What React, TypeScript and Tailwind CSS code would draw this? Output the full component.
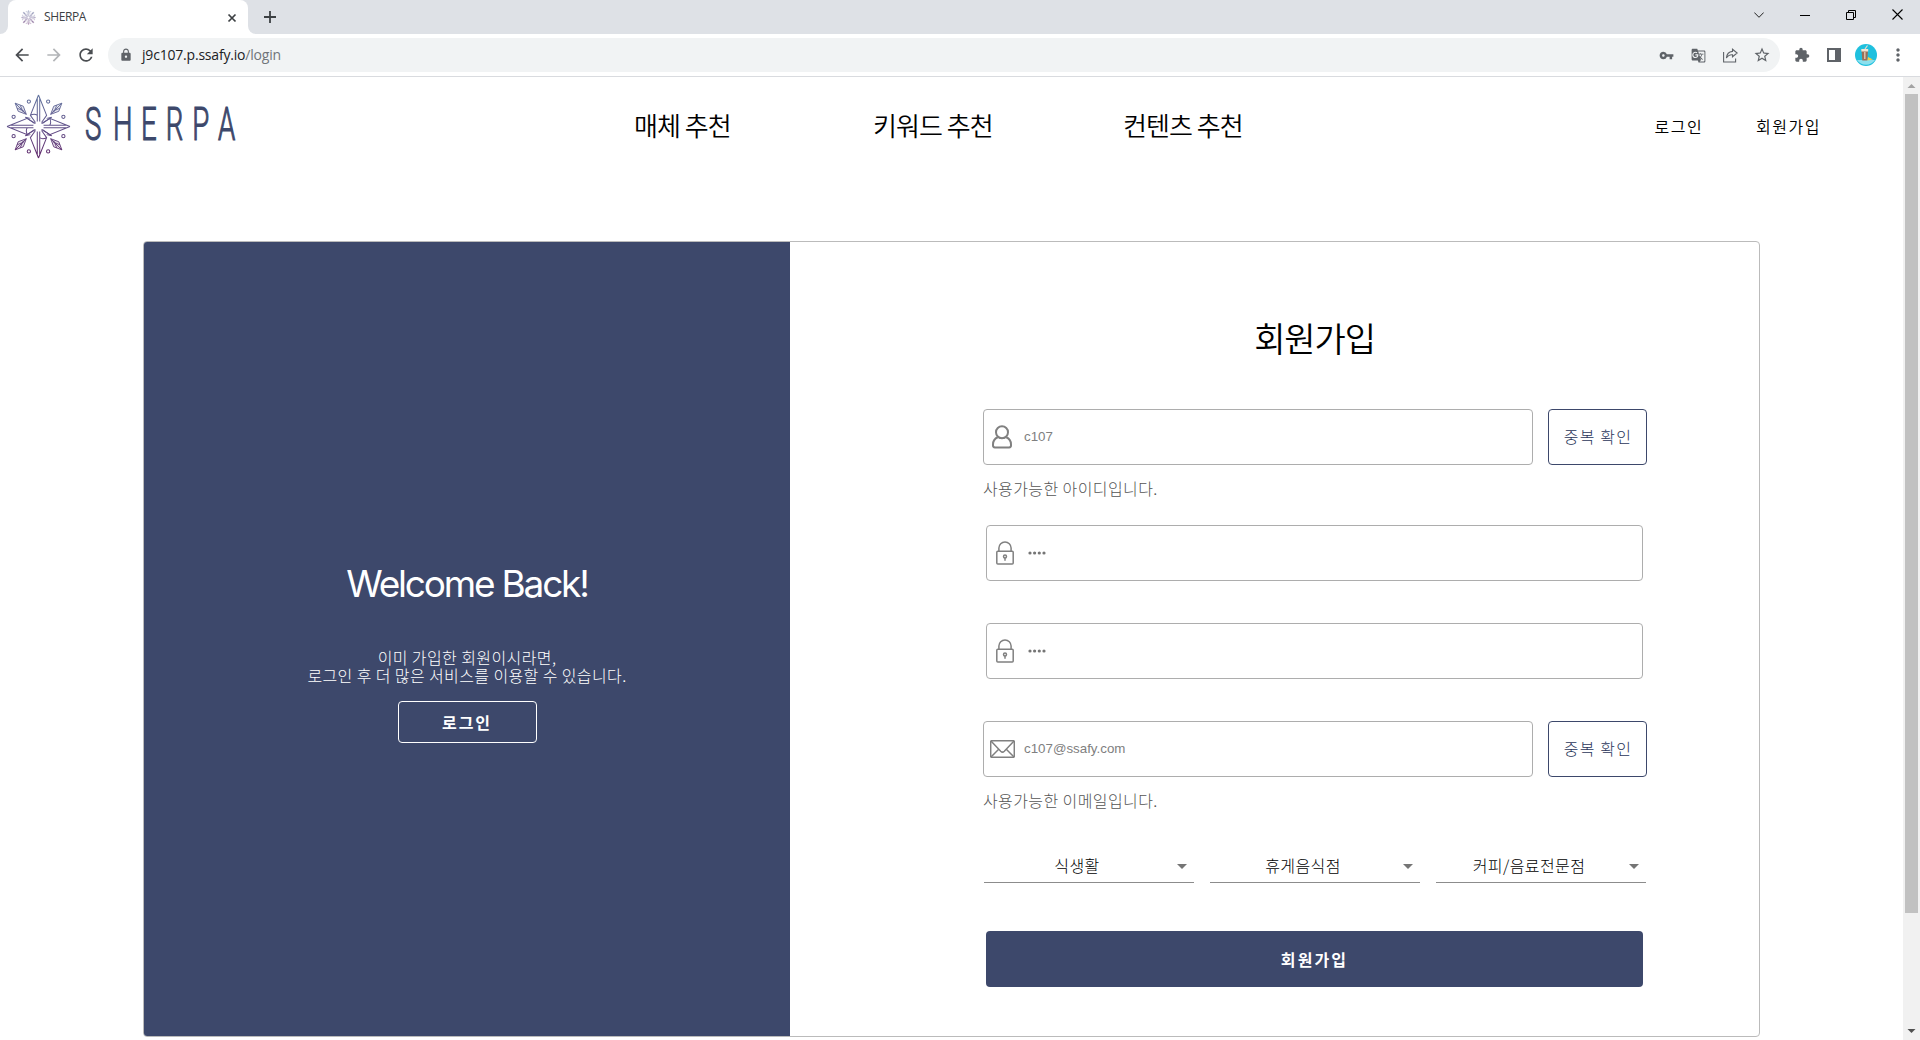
import React from "react";
import {
  MdArrowBack,
  MdArrowForward,
  MdRefresh,
  MdLock,
  MdVpnKey,
  MdGTranslate,
  MdStarBorder,
  MdExtension,
  MdMoreVert,
  MdArrowDropDown,
} from "react-icons/md";

function Compass({ className }: { className: string }) {
  const arms = [0, 90, 180, 270];
  return (
    <svg viewBox="-32 -32 64 64" className={className} fill="none" stroke="url(#compassFade)" strokeWidth="1">
      <defs>
        <linearGradient id="compassFade" gradientUnits="userSpaceOnUse" x1="0" y1="-32" x2="0" y2="32">
          <stop offset="0" stopColor="#62759f" />
          <stop offset="0.5" stopColor="#62538a" />
          <stop offset="1" stopColor="#5f2468" />
        </linearGradient>
      </defs>
      <path d="M0 -31L8 -11L3 -4M0 -31L-8 -11L-3 -4M-1.2 -28V-5M1.2 -28V-5M-8 -11Q-4 -13 -1.2 -11" />
      <path d="M0 31L8 11L3 4M0 31L-8 11L-3 4M-1.2 28V5M1.2 28V5M8 11Q4 13 1.2 11" />
      <path d="M-31 0L-11 8L-4 3M-31 0L-11 -8L-4 -3M-28 -1.2H-5M-28 1.2H-5M-11 8Q-13 4 -11 1.2" />
      <path d="M31 0L11 8L4 3M31 0L11 -8L4 -3M28 -1.2H5M28 1.2H5M11 -8Q13 -4 11 -1.2" />
      <path d="M-8 -8L-13 -9L-3 -3M8 -8L13 -9L3 -3M-8 8L-13 9L-3 3M8 8L13 9L3 3" />
      <g fill="url(#compassFade)" fillOpacity="0.15" strokeWidth="0.9">
        <path d="M-23 -23L-20 -15L-12 -12L-15 -20ZL-12 -12M-21 -18L-14 -15M-18 -21L-15 -14" />
        <path d="M23 -23L20 -15L12 -12L15 -20ZL12 -12M21 -18L14 -15M18 -21L15 -14" />
        <path d="M-23 23L-20 15L-12 12L-15 20ZL-12 12M-21 18L-14 15M-18 21L-15 14" />
        <path d="M23 23L20 15L12 12L15 20ZL12 12M21 18L14 15M18 21L15 14" />
      </g>
      {arms.map((a) => (
        <g key={a}>
          <circle cx={a < 180 ? 9.5 : -9.5} cy={a % 180 ? 24.5 : -24.5} r="1.6" />
          <circle cx={a < 180 ? 24.5 : -24.5} cy={a % 180 ? 9.5 : -9.5} r="1.6" />
        </g>
      ))}
    </svg>
  );
}

function Wordmark() {
  return (
    <svg width="164" height="64" viewBox="0 0 164 64" className="ml-[12px] overflow-visible">
      <text
        transform="scale(0.6 1)"
        y="46.5"
        x="3.5 50 96.5 138 182 225"
        fontFamily="Roboto"
        fontSize="46"
        fontWeight="300"
        fill="#3d486b"
        stroke="#3d486b"
        strokeWidth="1.2"
      >
        SHERPA
      </text>
    </svg>
  );
}

function UserIcon() {
  return (
    <svg width="20" height="24" viewBox="0 0 20 24" fill="none" stroke="#808080" strokeWidth="2">
      <circle cx="10" cy="7.3" r="6" />
      <path d="M5.8 12.3C3 13.4 1 16.3 1 19.6V20.6Q1 22.4 2.8 22.4H17.2Q19 22.4 19 20.6V19.6C19 16.3 17 13.4 14.2 12.3" />
      <path d="M5.8 12.3Q10 14.6 14.2 12.3" strokeWidth="1.2" />
    </svg>
  );
}

function PadlockIcon() {
  return (
    <svg width="18" height="24" viewBox="0 0 18 24" fill="none" stroke="#808080" strokeWidth="1.5">
      <rect x="0.8" y="10.3" width="16.4" height="12.7" rx="1" />
      <path d="M2.9 10V7A6.1 6.1 0 0 1 15.1 7V10" />
      <circle cx="9" cy="15.4" r="1.5" />
      <path d="M9 17V19.8" />
    </svg>
  );
}

function MailIcon() {
  return (
    <svg width="25" height="18" viewBox="0 0 25 18" fill="none" stroke="#808080" strokeWidth="1.5">
      <rect x="0.7" y="0.7" width="23.6" height="16.6" rx="1" />
      <path d="M1 1L10.7 11.2Q12.5 13 14.3 11.2L24 1M1 17L8.7 9.3M24 17L16.3 9.3" />
    </svg>
  );
}

function Dots() {
  return (
    <svg width="18" height="4" viewBox="0 0 18 4" fill="#757575" className="ml-px">
      <circle cx="2" cy="2" r="1.6" />
      <circle cx="6.6" cy="2" r="1.6" />
      <circle cx="11.3" cy="2" r="1.6" />
      <circle cx="16" cy="2" r="1.6" />
    </svg>
  );
}

function BrowserChrome() {
  return (
    <div className="shrink-0 font-['Open_Sans',sans-serif]">
      <div className="flex h-[34px] bg-[#dee1e6]">
        <div className="flex w-2 bg-white">
          <div className="w-2 rounded-br-lg bg-[#dee1e6]" />
        </div>
        <div className="flex w-[240px] items-center rounded-t-lg bg-white pr-[11px] pl-[13px]">
          <Compass className="size-[15px]" />
          <span className="ml-2 text-[12px] tracking-[-0.4px] text-[#3c4043]">SHERPA</span>
          <svg className="mt-px ml-auto" width="10" height="10" viewBox="0 0 10 10" stroke="#3c4043" strokeWidth="1.7">
            <path d="M1.5 1.5L8.5 8.5M8.5 1.5L1.5 8.5" />
          </svg>
        </div>
        <div className="flex w-2 bg-white">
          <div className="w-2 rounded-bl-lg bg-[#dee1e6]" />
        </div>
        <svg className="mt-[11px] ml-2" width="12" height="12" viewBox="0 0 12 12" stroke="#3c4043" strokeWidth="1.8">
          <path d="M6 0V12M0 6H12" />
        </svg>
        <div className="mt-[9px] mr-[17px] ml-auto flex h-[11px] items-center gap-[36px]">
          <svg width="10" height="10" viewBox="0 0 10 10" fill="none" stroke="#222">
            <path d="M0.3 2.5L5 7.3L9.7 2.5" />
          </svg>
          <svg width="10" height="10" viewBox="0 0 10 10" stroke="#000">
            <path d="M0 5.5H10" />
          </svg>
          <svg width="10" height="10" viewBox="0 0 10 10" fill="none" stroke="#000">
            <path d="M0.5 2.5H7.5V9.5H0.5ZM2.5 2.5V0.5H9.5V7.5H7.5" />
          </svg>
          <svg width="11" height="11" viewBox="0 0 11 11" stroke="#000" strokeWidth="1.1">
            <path d="M0.5 0.5L10.5 10.5M10.5 0.5L0.5 10.5" />
          </svg>
        </div>
      </div>
      <div className="flex h-[43px] items-center border-b border-[#d9dbdf] bg-white pr-[11px] pl-[12px] text-[#5f6368]">
        <MdArrowBack className="size-5 text-[#4a4d51]" />
        <MdArrowForward className="ml-3 size-5 text-[#b3b5b8]" />
        <MdRefresh className="ml-3 size-5 text-[#4a4d51]" />
        <div className="ml-[12px] flex h-[34px] w-[1672px] shrink-0 items-center rounded-full bg-[#f1f3f4] pr-[9px] pl-[11px]">
          <MdLock className="size-[14px]" />
          <span className="ml-[9px] pb-px text-[14px] tracking-[-0.2px] whitespace-nowrap text-[#202124]">
            j9c107.p.ssafy.io<span className="text-[#70757a]">/login</span>
          </span>
          <MdVpnKey className="ml-auto size-[15px]" />
          <MdGTranslate className="ml-[17px] size-[15px]" />
          <svg className="ml-[17px]" width="15" height="15" viewBox="0 0 15 15" fill="none" stroke="#5f6368" strokeWidth="1.1">
            <path d="M0.6 4V14H12.6V10.5M9.5 1.2L14.2 5L9.5 8.8V6.7Q5.5 6.4 3.4 10Q4 4 9.5 3.4Z" />
          </svg>
          <MdStarBorder className="ml-[15px] size-[18px]" />
        </div>
        <MdExtension className="ml-[14px] size-4 shrink-0" />
        <svg className="ml-[17px] shrink-0" width="14" height="14" viewBox="0 0 14 14">
          <path fill="#5f6368" fillRule="evenodd" d="M0 0H14V14H0ZM2 2V12H8V2Z" />
        </svg>
        <svg className="ml-[14px] shrink-0" width="22" height="22" viewBox="0 0 22 22">
          <circle cx="11" cy="11" r="11" fill="#1fc0de" />
          <path d="M2 16H20A11 11 0 0 1 2 16" fill="#8ce0ee" />
          <path d="M6.5 6H13L12.3 16.5H7.3Z" fill="#9a6f58" />
          <path d="M6.3 5H13.2V7.5H6.3Z" fill="#f3e4d2" />
          <path d="M10 5L12.5 1.5" stroke="#e7dcd0" strokeWidth="1.2" />
          <path d="M9.8 8V15" stroke="#e0c9b2" strokeWidth="1.4" />
          <path d="M13 13L18 15.5L12.5 16.5Z" fill="#f2cf4a" />
        </svg>
        <MdMoreVert className="ml-[11px] size-5 shrink-0" />
      </div>
    </div>
  );
}

function SiteHeader() {
  return (
    <header className="flex h-[98px] shrink-0 items-center text-black">
      <div className="flex w-[634px] items-center pl-[6px]">
        <Compass className="size-[65px]" />
        <Wordmark />
      </div>
      <nav className="flex pb-[3px] text-[26px] font-[350] tracking-[-0.95px] whitespace-nowrap">
        <span className="w-[239px]">매체 추천</span>
        <span className="w-[250px]">키워드 추천</span>
        <span>컨텐츠 추천</span>
      </nav>
      <div className="mr-[82px] ml-auto flex gap-[53px] text-[16px] font-[350] tracking-[1.5px]">
        <span>로그인</span>
        <span>회원가입</span>
      </div>
    </header>
  );
}

function Field({ icon, children, className }: { icon: React.ReactNode; children: React.ReactNode; className: string }) {
  return (
    <div className={`flex h-[56px] items-center rounded-[4px] border border-[#adadad] bg-white ${className}`}>
      <div className="flex w-[36px] justify-center">{icon}</div>
      <div className="ml-[4px] font-['Liberation_Sans',sans-serif] text-[13.33px] text-[#808080]">{children}</div>
    </div>
  );
}

function CheckButton() {
  return (
    <button className="ml-[15px] h-[56px] w-[99px] rounded-[4px] border border-[#3d486b] pb-[2px] pl-px text-[16px] font-light tracking-[1.2px] text-[#2b365a]">
      중복 확인
    </button>
  );
}

function Choice({ label }: { label: string }) {
  return (
    <div className="flex h-[34px] w-[210px] items-center border-b border-[#8c8c8c]">
      <span className="w-[186px] pb-[2px] text-center text-[16px] leading-[24px] font-light tracking-[0.4px] text-black">
        {label}
      </span>
      <MdArrowDropDown className="size-6 text-[#757575]" />
    </div>
  );
}

function SignupForm() {
  return (
    <section className="flex flex-1 flex-col pl-[193px]">
      <h1 className="mt-[71px] w-[663px] text-center text-[34px] leading-[50px] font-[350] tracking-[-1.1px] text-black">
        회원가입
      </h1>
      <div className="mt-[46px] flex">
        <Field className="w-[550px]" icon={<UserIcon />}>c107</Field>
        <CheckButton />
      </div>
      <p className="mt-[11px] h-[24px] text-[16px] leading-[24px] font-light tracking-[0.4px] text-[#555]">사용가능한 아이디입니다.</p>
      <Field className="mt-[25px] ml-[3px] w-[657px]" icon={<PadlockIcon />}><Dots /></Field>
      <Field className="mt-[42px] ml-[3px] w-[657px]" icon={<PadlockIcon />}><Dots /></Field>
      <div className="mt-[42px] flex">
        <Field className="w-[550px]" icon={<MailIcon />}>c107@ssafy.com</Field>
        <CheckButton />
      </div>
      <p className="mt-[11px] h-[24px] text-[16px] leading-[24px] font-light tracking-[0.4px] text-[#555]">사용가능한 이메일입니다.</p>
      <div className="mt-[37px] ml-px flex gap-4">
        <Choice label="식생활" />
        <Choice label="휴게음식점" />
        <Choice label="커피/음료전문점" />
      </div>
      <button className="mt-[48px] ml-[3px] h-[56px] w-[657px] rounded-[4px] bg-[#3d486b] text-[16px] font-bold tracking-[2.1px] text-white">
        회원가입
      </button>
    </section>
  );
}

function WelcomePanel() {
  return (
    <aside className="flex w-[646px] flex-col items-center bg-[#3d486b] text-white">
      <h2 className="mt-[317px] font-[Inter,sans-serif] text-[37px] leading-[50px] font-normal tracking-[-2.2px]">Welcome Back!</h2>
      <p className="mt-[39px] text-center text-[16px] leading-[18px] font-light tracking-[0.4px] whitespace-nowrap">
        이미 가입한 회원이시라면,
        <br />
        로그인 후 더 많은 서비스를 이용할 수 있습니다.
      </p>
      <button className="mt-[17px] h-[42px] w-[139px] rounded-[4px] border border-white pb-px text-[16px] font-bold tracking-[2px]">
        로그인
      </button>
    </aside>
  );
}

function Scrollbar() {
  return (
    <div className="flex w-[17px] flex-col items-center bg-[#f1f1f1]">
      <svg width="17" height="17" viewBox="0 0 17 17" fill="#a3a3a3">
        <path d="M8.5 7L12.5 11H4.5Z" />
      </svg>
      <div className="h-[819px] w-[13px] bg-[#c1c1c1]" />
      <svg className="mt-auto" width="17" height="17" viewBox="0 0 17 17" fill="#505050">
        <path d="M8.5 10L4.5 6H12.5Z" />
      </svg>
    </div>
  );
}

export default function App() {
  return (
    <div className="flex h-[1040px] w-[1920px] flex-col overflow-hidden bg-white font-['Noto_Sans_CJK_KR',sans-serif]">
      <BrowserChrome />
      <div className="flex min-h-0 flex-1">
        <main className="flex flex-1 flex-col">
          <SiteHeader />
          <div className="mt-[66px] ml-[143px] flex h-[796px] w-[1617px] shrink-0 overflow-hidden rounded-[4px] border border-[#bbb] bg-white">
            <WelcomePanel />
            <SignupForm />
          </div>
        </main>
        <Scrollbar />
      </div>
    </div>
  );
}
